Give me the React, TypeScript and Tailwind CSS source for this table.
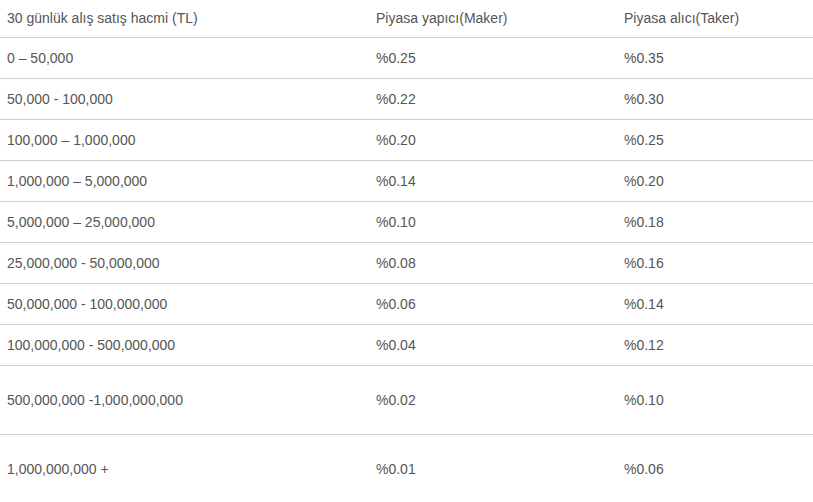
const rows: [string, string, string, string][] = [
  ['0 – 50,000', '%0.25', '%0.35', 'h-[41px]'],
  ['50,000 - 100,000', '%0.22', '%0.30', 'h-[41px]'],
  ['100,000 – 1,000,000', '%0.20', '%0.25', 'h-[41px]'],
  ['1,000,000 – 5,000,000', '%0.14', '%0.20', 'h-[41px]'],
  ['5,000,000 – 25,000,000', '%0.10', '%0.18', 'h-[41px]'],
  ['25,000,000 - 50,000,000', '%0.08', '%0.16', 'h-[41px]'],
  ['50,000,000 - 100,000,000', '%0.06', '%0.14', 'h-[41px]'],
  ['100,000,000 - 500,000,000', '%0.04', '%0.12', 'h-[41px]'],
  ['500,000,000 -1,000,000,000', '%0.02', '%0.10', 'h-[69px]'],
  ['1,000,000,000 +', '%0.01', '%0.06', 'h-[69px]'],
];

export default function App() {
  return (
    <div className="w-[813px] h-[502px] overflow-hidden bg-white font-['Liberation_Sans',Arial,sans-serif] text-[14px] text-[#555]">
      {/* Header */}
      <div className="grid grid-cols-[368px_248px_1fr] h-[38px] border-b border-[#cfcfcf] items-center">
        <div className="pl-[7px]">30 günlük alış satış hacmi (TL)</div>
        <div className="pl-[8px]">Piyasa yapıcı(Maker)</div>
        <div className="pl-[8px]">Piyasa alıcı(Taker)</div>
      </div>
      {rows.map(([vol, maker, taker, h], i) => (
        <div
          key={vol}
          className={`grid grid-cols-[368px_248px_1fr] items-center ${h} ${i < rows.length - 1 ? 'border-b border-[#cfcfcf]' : ''}`}
        >
          <div className="pl-[7px]">{vol}</div>
          <div className="pl-[8px]">{maker}</div>
          <div className="pl-[8px]">{taker}</div>
        </div>
      ))}
    </div>
  );
}
